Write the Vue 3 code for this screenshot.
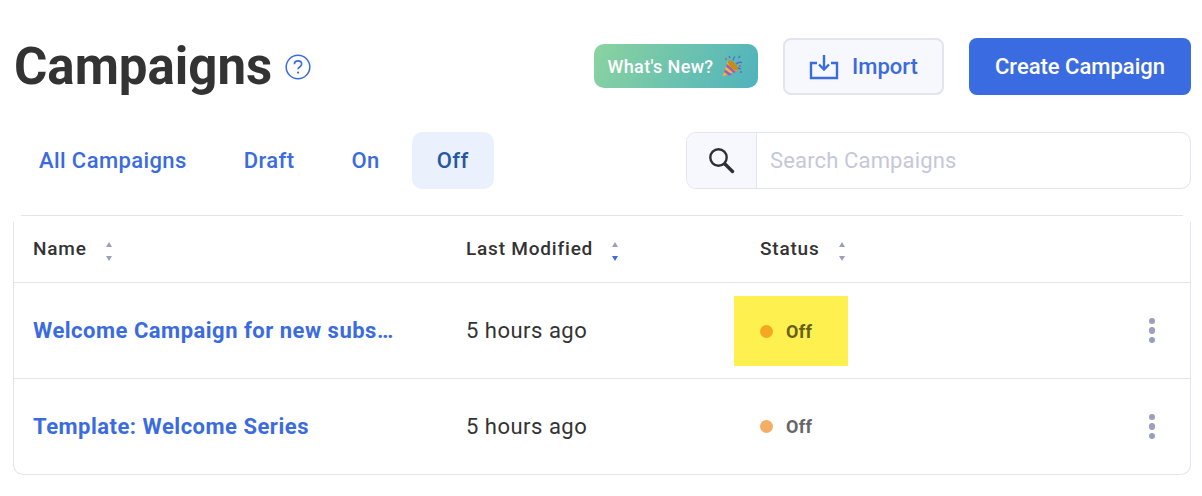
<script setup>
const rows = [
  { name: 'Welcome Campaign for new subs…', modified: '5 hours ago', highlighted: true },
  { name: 'Template: Welcome Series', modified: '5 hours ago', highlighted: false }
]
const columns = [
  { label: 'Name', active: false },
  { label: 'Last Modified', active: true },
  { label: 'Status', active: false }
]
const tabs = ['All Campaigns', 'Draft', 'On', 'Off']
</script>

<template>
  <main class="page">
    <header class="top">
      <div class="title-wrap">
        <h1>Campaigns</h1>
        <svg class="help" width="26" height="26" viewBox="0 0 26 26" fill="none">
          <circle cx="13" cy="13" r="11.8" stroke="#3b6be0" stroke-width="1.5" />
          <path d="M9.4 10.2c0-2.1 1.6-3.4 3.6-3.4s3.6 1.3 3.6 3.2c0 1.5-.9 2.3-2 3-.9.6-1.5 1.1-1.5 2.3" stroke="#3b6be0" stroke-width="1.7" />
          <circle cx="13.1" cy="18.6" r="1.1" fill="#3b6be0" />
        </svg>
      </div>
      <div class="actions">
        <button class="whats-new">
          What's New?
          <svg width="24" height="24" viewBox="0 0 24 24">
            <path d="M2.5 22.5 8 7l9.5 9.5z" fill="#f2b632" />
            <path d="M5 15.5 12 20.5l-3 1-5-3.5zM7 10l9 8-2.500 1-7.500-6.500z" fill="#9a5bc9" />
            <ellipse cx="13" cy="11.500" rx="2.800" ry="6.500" transform="rotate(-45 13 11.500)" fill="#c98a18" />
            <path d="M13 6.500c0-2 1-3 2-4M16 10c2-2 4-2 6-1.500M9 2l1 2M20 2l-1.500 2M18 14l3 .8" stroke="#4f6fd0" stroke-width="1.300" fill="none" />
            <circle cx="6" cy="5" r="1" fill="#d04f7a" /><circle cx="20" cy="12" r="1" fill="#d04f7a" /><circle cx="21" cy="18" r="1" fill="#7a5bc9" />
          </svg>
        </button>
        <button class="import">
          <svg width="30" height="26" viewBox="0 0 30 26" fill="none" stroke="#3b6be0" stroke-width="2.400">
            <path d="M8 9H2v15h26V9h-6" />
            <path d="M15 1v14M10 10.500l5 5 5-5" />
          </svg>
          Import
        </button>
        <button class="create">Create Campaign</button>
      </div>
    </header>

    <section class="filters">
      <nav class="tabs">
        <a v-for="t in tabs" :key="t" class="tab" :class="{ active: t === 'Off' }">{{ t }}</a>
      </nav>
      <div class="search">
        <span class="addon">
          <svg width="30" height="30" viewBox="0 0 30 30" fill="none" stroke="#2f2f33">
            <circle cx="11.500" cy="11.500" r="8.200" stroke-width="2.400" />
            <path d="m18 18 7.500 7.500" stroke-width="3.400" stroke-linecap="round" />
          </svg>
        </span>
        <span class="placeholder">Search Campaigns</span>
      </div>
    </section>

    <section class="table">
      <div class="top-rule"></div>
      <div class="table-body">
        <div class="row head">
          <div v-for="c in columns" :key="c.label" class="th">
            <span>{{ c.label }}</span>
            <span class="sort">
              <i class="up"></i>
              <i class="down" :class="{ on: c.active }"></i>
            </span>
          </div>
          <div></div>
        </div>
        <div v-for="r in rows" :key="r.name" class="row item">
          <a class="name">{{ r.name }}</a>
          <span class="mod">{{ r.modified }}</span>
          <div>
            <span class="status" :class="{ marked: r.highlighted }"><i class="dot"></i>Off</span>
          </div>
          <div class="more"><i></i><i></i><i></i></div>
        </div>
      </div>
    </section>
  </main>
</template>

<style scoped>
.page {
  width: 1202px;
  height: 496px;
  box-sizing: border-box;
  padding: 38px 11px 0 14px;
  font-family: Roboto, "Liberation Sans", sans-serif;
  color: #333;
  background: #fff;
  overflow: hidden;
}
.top {
  display: flex;
  justify-content: space-between;
  align-items: center;
  height: 57px;
}
.title-wrap {
  display: flex;
  align-items: center;
  gap: 13px;
}
h1 {
  margin: 0;
  font-size: 51px;
  line-height: 57px;
  font-weight: 700;
  color: #333;
}
.actions {
  display: flex;
  align-items: center;
}
button {
  font-family: inherit;
  border: 0;
  cursor: pointer;
  display: flex;
  align-items: center;
  justify-content: center;
  padding: 0;
}
.whats-new {
  width: 164px;
  height: 44px;
  gap: 7px;
  border-radius: 10px;
  color: #fff;
  font-size: 18px;
  font-weight: 500;
  letter-spacing: 0.35px;
  background: linear-gradient(115deg, #8bd3a0, #4fb3bd);
  margin-right: 25px;
  margin-bottom: 1px;
}
.import {
  width: 161px;
  height: 57px;
  box-sizing: border-box;
  gap: 13px;
  border: 2px solid #e2e4ee;
  border-radius: 8px;
  background: #f7f8fd;
  color: #3b6be0;
  font-size: 22px;
  font-weight: 500;
  margin-right: 25px;
}
.create {
  width: 222px;
  height: 57px;
  border-radius: 8px;
  background: #3b6be0;
  color: #fff;
  font-size: 22px;
  font-weight: 500;
}
.filters {
  display: flex;
  justify-content: space-between;
  margin-top: 37px;
  height: 57px;
}
.tabs {
  display: flex;
  gap: 7px;
}
.tab {
  display: flex;
  align-items: center;
  padding: 0 25px;
  border-radius: 10px;
  color: #3b6be0;
  font-size: 22px;
  font-weight: 500;
  letter-spacing: 0.4px;
}
.tab.active {
  background: #ebf1fc;
  color: #27579f;
}
.search {
  width: 505px;
  box-sizing: border-box;
  border: 1.500px solid #e2e4ee;
  border-radius: 10px;
  display: flex;
  align-items: stretch;
  overflow: hidden;
}
.addon {
  width: 69px;
  flex: none;
  display: flex;
  align-items: center;
  justify-content: center;
  background: #f7f8fd;
  border-right: 1.500px solid #e2e4ee;
}
.placeholder {
  display: flex;
  align-items: center;
  padding-left: 13px;
  color: #c5c8d8;
  font-size: 22px;
  letter-spacing: 0.15px;
}
.table {
  margin-top: 26px;
  width: 1178px;
  margin-left: -1px;
}
.top-rule {
  height: 1px;
  margin: 0 8px;
  background: #e2e4ee;
}
.table-body {
  margin-top: 6px;
  border: 1.500px solid #e2e4ee;
  border-top: 0;
  border-radius: 0 0 10px 10px;
}
.row {
  display: grid;
  grid-template-columns: 433px 294px 1fr 77px;
  align-items: center;
  padding-left: 19px;
  border-bottom: 1.500px solid #e2e4ee;
}
.row:last-child {
  border-bottom: 0;
}
.head {
  height: 61px;
  box-sizing: border-box;
  padding-bottom: 7px;
}
.item {
  height: 95px;
}
.th {
  display: flex;
  align-items: center;
  font-size: 19px;
  font-weight: 500;
  letter-spacing: 0.8px;
  color: #333;
}
.sort {
  display: flex;
  flex-direction: column;
  gap: 9px;
  margin-left: 19px;
  margin-top: 5px;
}
.sort i {
  width: 0;
  height: 0;
  border-left: 3.500px solid transparent;
  border-right: 3.500px solid transparent;
}
.sort .up {
  border-bottom: 5px solid #9b9ebc;
}
.sort .down {
  border-top: 5px solid #9b9ebc;
}
.sort .down.on {
  border-top-color: #3b6be0;
}
.name {
  color: #3b6be0;
  font-size: 22px;
  font-weight: 700;
  letter-spacing: 0.5px;
  white-space: nowrap;
}
.mod {
  font-size: 22px;
  letter-spacing: 0.5px;
  color: #333;
}
.status {
  display: inline-flex;
  align-items: center;
  font-size: 18px;
  font-weight: 700;
  letter-spacing: 0.3px;
  color: #666;
}
.status.marked {
  height: 70px;
  width: 114px;
  box-sizing: border-box;
  margin-left: -26px;
  margin-top: 1px;
  padding-left: 26px;
  background: #fef14f;
  color: #665f20;
}
.status.marked .dot {
  background: #f5a623;
}
.dot {
  width: 13px;
  height: 13px;
  border-radius: 50%;
  background: #f4ae64;
  margin-right: 13px;
}
.more {
  display: flex;
  flex-direction: column;
  align-items: center;
  gap: 3px;
  width: 6px;
  margin-left: 36px;
}
.more i {
  width: 6.500px;
  height: 6.500px;
  flex: none;
  border-radius: 50%;
  background: #9b9ebc;
}
</style>
